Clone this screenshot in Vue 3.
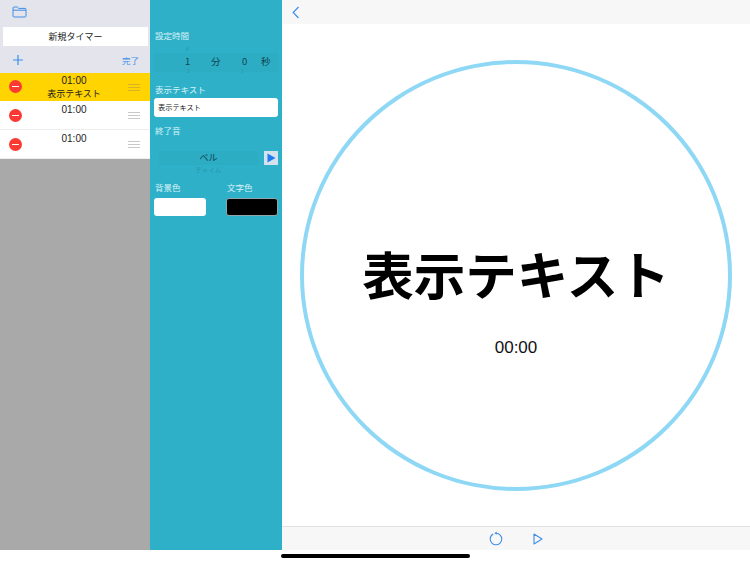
<template>
  <div class="screen">
    <div class="columns">
      <aside class="list-pane">
        <div class="list-head">
          <div class="folder-row">
            <svg width="15" height="12" viewBox="0 0 15 12" fill="none" stroke="#3f8ee8" stroke-width="1">
              <path d="M1 10V2C1 1.4 1.4 1 2 1H5.4L6.8 2.4H13C13.6 2.4 14 2.8 14 3.4V10C14 10.6 13.6 11 13 11H2C1.4 11 1 10.6 1 10Z" />
              <path d="M1 4.2H14" />
            </svg>
          </div>
          <div class="new-timer">新規タイマー</div>
          <div class="edit-row">
            <svg width="12" height="12" viewBox="0 0 12 12" stroke="#3f8ee8" stroke-width="1.2">
              <path d="M6 1V11M1 6H11" />
            </svg>
            <span class="done">完了</span>
          </div>
        </div>
        <div
          v-for="(timer, i) in timers"
          :key="i"
          class="timer-row"
          :class="{ active: timer.active }"
        >
          <span class="minus"><i></i></span>
          <div class="timer-text">
            <div>{{ timer.time }}</div>
            <div v-if="timer.label">{{ timer.label }}</div>
          </div>
          <span class="grip"><i></i><i></i><i></i></span>
        </div>
        <div class="list-empty"></div>
      </aside>

      <section class="settings">
        <div class="label">設定時間</div>
        <div class="picker time-picker">
          <span class="ghost g1">0</span>
          <span class="val v1">1</span>
          <span class="val v2">分</span>
          <span class="val v3">0</span>
          <span class="val v4">秒</span>
          <span class="ghost g2">2</span>
          <span class="ghost g3">1</span>
        </div>
        <div class="label text-label">表示テキスト</div>
        <div class="text-input">表示テキスト</div>
        <div class="label sound-label">終了音</div>
        <div class="sound-row">
          <div class="sound-picker">
            <div class="sound-current">ベル</div>
            <div class="sound-next">チャイム</div>
          </div>
          <span class="preview">
            <svg width="9" height="10" viewBox="0 0 9 10"><path d="M0.5 0.5L8.5 5L0.5 9.5Z" fill="#1f7cf0" /></svg>
          </span>
        </div>
        <div class="colors">
          <div class="color-col">
            <div class="label">背景色</div>
            <div class="swatch white"></div>
          </div>
          <div class="color-col">
            <div class="label">文字色</div>
            <div class="swatch black"></div>
          </div>
        </div>
      </section>

      <main class="preview-pane">
        <div class="nav-bar">
          <svg width="8" height="13" viewBox="0 0 8 13" fill="none" stroke="#3f8ee8" stroke-width="1.2">
            <path d="M6.5 1L1.2 6.5L6.5 12" />
          </svg>
        </div>
        <div class="stage">
          <div class="ring">
            <div class="big-text">表示テキスト</div>
            <div class="count">00:00</div>
          </div>
        </div>
        <div class="tool-bar">
          <svg width="14" height="15" viewBox="0 0 14 15" fill="none" stroke="#3f8ee8" stroke-width="1.1">
            <path d="M4.2 3C2.4 4 1.2 5.8 1.2 8C1.2 11.2 3.8 13.8 7 13.8C10.2 13.8 12.8 11.2 12.8 8C12.8 4.9 10.3 2.4 7.2 2.2" />
            <path d="M7.6 0.6L5.4 2.2L7.6 3.8Z" fill="#3f8ee8" stroke="none" />
          </svg>
          <svg class="play" width="10" height="12" viewBox="0 0 10 12" fill="none" stroke="#3f8ee8" stroke-width="1.1">
            <path d="M1 1L9 6L1 11Z" stroke-linejoin="round" />
          </svg>
        </div>
      </main>
    </div>
    <div class="home-area"><div class="home-bar"></div></div>
  </div>
</template>

<script setup>
const timers = [
  { time: '01:00', label: '表示テキスト', active: true },
  { time: '01:00', label: '' },
  { time: '01:00', label: '' }
]
</script>

<style>
html, body { margin: 0; background: #fff; }
</style>

<style scoped>
.screen {
  width: 750px;
  height: 562px;
  display: flex;
  flex-direction: column;
  overflow: hidden;
  font-family: "Noto Sans CJK JP", "Liberation Sans", sans-serif;
  color: #111;
}
.columns { flex: 1; display: flex; min-height: 0; }

/* left list */
.list-pane { width: 150px; display: flex; flex-direction: column; background: #a9a9a9; }
.list-head { background: #e4e4ec; height: 73px; }
.folder-row { height: 27px; padding-left: 12px; display: flex; align-items: center; box-sizing: border-box; padding-bottom: 3px; }
.new-timer {
  margin: 0 2px 0 3px;
  height: 19px;
  background: #fff;
  font-size: 9px;
  line-height: 19px;
  text-align: center;
  color: #222;
}
.edit-row { height: 27px; display: flex; align-items: center; justify-content: space-between; padding: 0 11px 0 12px; }
.done { font-size: 8.5px; color: #3f8ee8; }
.timer-row {
  height: 29px;
  background: #fff;
  display: flex;
  position: relative;
  box-sizing: border-box;
  border-bottom: 1px solid #eee;
}
.timer-row.active { background: #ffd400; height: 28px; border-bottom: 0; }
.minus {
  width: 13px;
  height: 13px;
  border-radius: 50%;
  background: #fb3a34;
  margin: 8px 0 0 9px;
  display: flex;
  align-items: center;
  justify-content: center;
  flex: none;
}
.active .minus { margin-top: 7px; }
.minus i { width: 7px; height: 1px; background: #fff; }
.timer-text {
  position: absolute;
  left: 0;
  width: 148px;
  text-align: center;
  font-size: 9px;
  line-height: 13px;
  padding-top: 2px;
  color: #222;
}
.active .timer-text { padding-top: 1px; }
.timer-text > div:first-child { font-family: "Liberation Sans", sans-serif; font-size: 10px; }
.grip { width: 12px; margin: 11px 10px 0 auto; flex: none; display: flex; flex-direction: column; gap: 2px; }
.grip i { display: block; height: 1px; background: #c8c8c8; }
.active .grip i { background: #d6b426; }
.list-empty { flex: 1; }

/* settings */
.settings {
  width: 132px;
  background: #2eb0c8;
  box-sizing: border-box;
  padding: 28px 4px 0 4px;
  position: relative;
}
.label { font-size: 8.5px; line-height: 14px; color: #d8f2f6; padding-left: 1px; }
.picker { position: relative; height: 35px; margin-top: 5px; }
.time-picker { background: linear-gradient(#2eb0c8 6px, #2dadc4 6px, #2dadc4 25px, #2eb0c8 25px); }
.val { position: absolute; top: 7px; font-size: 9.5px; line-height: 14px; color: #12424f; }
.v1 { left: 31px; }
.v2 { left: 57px; }
.v3 { left: 88px; }
.v4 { left: 107px; }
.ghost { position: absolute; font-size: 5px; line-height: 6px; color: #2a95a9; }
.g1 { left: 32px; top: -1px; }
.g2 { left: 33px; top: 21px; }
.g3 { left: 87px; top: 21px; }
.text-label { margin-top: 0; }
.text-input {
  margin-top: 2px;
  height: 19px;
  background: #fff;
  border-radius: 3px;
  font-size: 7.2px;
  line-height: 19px;
  padding-left: 4px;
  color: #222;
}
.sound-label { margin-top: 6px; }
.sound-row { display: flex; align-items: center; margin-top: 14px; height: 24px; }
.sound-picker { flex: 1; text-align: center; margin-right: 6px; margin-left: 5px; height: 24px; position: relative; }
.sound-current { background: #2dadc4; font-size: 9px; line-height: 14px; color: #12424f; height: 14px; }
.sound-next { font-size: 6px; line-height: 9px; color: #2a95a9; letter-spacing: 0.5px; }
.preview {
  width: 14px;
  height: 14px;
  background: #d4e2ee;
  display: flex;
  align-items: center;
  justify-content: center;
  margin: 0 0 10px 0;
  flex: none;
}
.colors { display: flex; justify-content: space-between; margin-top: 5px; }
.color-col { width: 52px; }
.swatch { height: 18px; margin-top: 4px; border-radius: 3px; box-sizing: border-box; }
.white { background: #fff; }
.black { background: #000; border: 1px solid #8fa5ab; }

/* preview */
.preview-pane { flex: 1; display: flex; flex-direction: column; background: #fff; }
.nav-bar { height: 24px; background: #f7f7f7; display: flex; align-items: center; padding-left: 10px; box-sizing: border-box; }
.stage { flex: 1; display: flex; align-items: center; justify-content: center; }
.ring {
  width: 432px;
  height: 431px;
  box-sizing: border-box;
  border: 4px solid #8fd8f5;
  border-radius: 50%;
  display: flex;
  flex-direction: column;
  align-items: center;
  justify-content: center;
}
.ring::before { content: ""; height: 53px; }
.big-text { font-size: 51.5px; line-height: 66px; font-weight: 700; color: #000; }
.count { font-family: "Liberation Sans", sans-serif; font-size: 17px; line-height: 20px; margin-top: 32px; height: 26px; color: #111; }
.tool-bar {
  height: 24px;
  background: #f7f7f7;
  border-top: 1px solid #e2e2e2;
  box-sizing: border-box;
  display: flex;
  align-items: center;
  padding-left: 207px;
  gap: 30px;
}
.home-area { height: 12px; background: #fff; padding: 4px 0 0 281px; box-sizing: border-box; }
.home-bar { width: 189px; height: 4px; background: #000; border-radius: 2px; }
</style>
